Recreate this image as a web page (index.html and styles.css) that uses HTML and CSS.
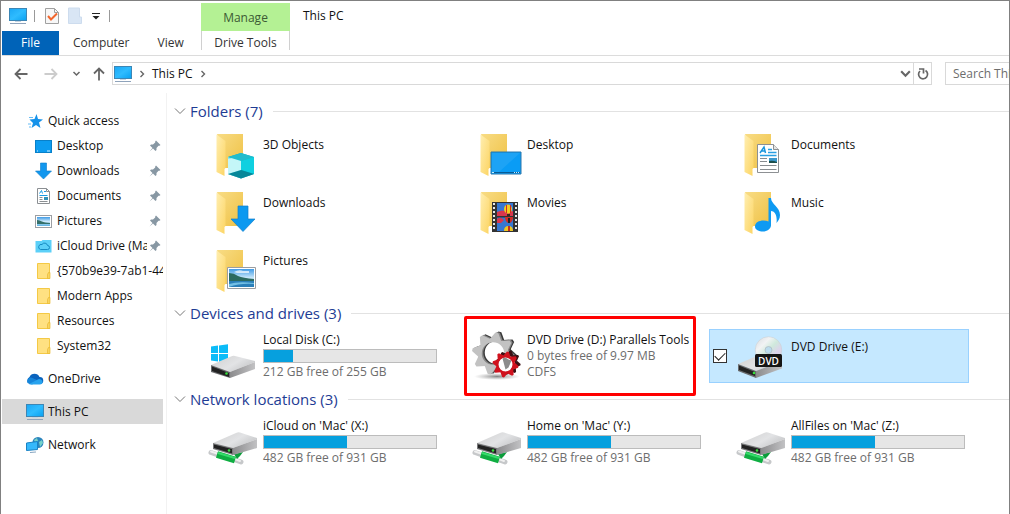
FILE: index.html
```html
<!DOCTYPE html>
<html lang="en">
<head>
    <meta charset="UTF-8">
    <meta name="viewport" content="width=device-width, initial-scale=1.0">
    <title>This PC</title>
    <link rel="stylesheet" href="styles.css">
</head>
<body>
    <!-- shared icons -->
    <svg class="sprite" width="0" height="0" aria-hidden="true">
        <defs>
            <linearGradient id="g-screen" x1="0" y1="0" x2="1" y2="1">
                <stop offset="0" stop-color="#1aa7f5"/><stop offset="0.5" stop-color="#2fbcff"/><stop offset="1" stop-color="#08a0f0"/>
            </linearGradient>
            <linearGradient id="g-back" x1="0" y1="0" x2="1" y2="1">
                <stop offset="0" stop-color="#f8dc85"/><stop offset="1" stop-color="#efc144"/>
            </linearGradient>
            <linearGradient id="g-flap" x1="0" y1="0" x2="1" y2="1">
                <stop offset="0" stop-color="#ffeeb0"/><stop offset="1" stop-color="#fcd462"/>
            </linearGradient>
            <linearGradient id="g-sky" x1="0" y1="0" x2="0" y2="1">
                <stop offset="0" stop-color="#3f9ae5"/><stop offset="0.5" stop-color="#cdeafb"/><stop offset="1" stop-color="#5bb0e0"/>
            </linearGradient>
            <linearGradient id="g-metal" x1="0" y1="0" x2="1" y2="0.6">
                <stop offset="0" stop-color="#cfcfcf"/><stop offset="0.6" stop-color="#e2e3e5"/><stop offset="1" stop-color="#c6c7c9"/>
            </linearGradient>
            <linearGradient id="g-side" x1="0" y1="0" x2="1" y2="0">
                <stop offset="0" stop-color="#8b8b8d"/><stop offset="1" stop-color="#c2c2c4"/>
            </linearGradient>
            <linearGradient id="g-disc" x1="0" y1="0" x2="1" y2="1">
                <stop offset="0" stop-color="#d6dade"/><stop offset="0.3" stop-color="#f2f3f4"/><stop offset="0.5" stop-color="#cfe9dc"/><stop offset="0.7" stop-color="#dcd3ea"/><stop offset="1" stop-color="#d5dade"/>
            </linearGradient>
            <radialGradient id="g-shadow">
                <stop offset="0" stop-color="#666" stop-opacity="0.8"/><stop offset="1" stop-color="#999" stop-opacity="0"/>
            </radialGradient>
            <path id="tooth" d="M-6.500-13l4.500-8h3l5 8z"/>
            <g id="gear">
                <circle r="13" fill="none" stroke="currentColor" stroke-width="3.500"/>
                <g fill="currentColor">
                    <use href="#tooth" transform="rotate(12)"/><use href="#tooth" transform="rotate(57)"/><use href="#tooth" transform="rotate(102)"/><use href="#tooth" transform="rotate(147)"/><use href="#tooth" transform="rotate(192)"/><use href="#tooth" transform="rotate(237)"/><use href="#tooth" transform="rotate(282)"/><use href="#tooth" transform="rotate(327)"/>
                </g>
            </g>
        </defs>

        <symbol id="pc" viewBox="0 0 18 18">
            <rect x="0.5" y="1.5" width="17" height="12" fill="url(#g-screen)" stroke="#3c86b5"/>
            <path d="M6 14h6v1H6z" fill="#c4d4e4"/>
            <path d="M1 16.5h16" stroke="#8fa3bb"/>
        </symbol>
        <symbol id="folder-small" viewBox="0 0 18 18">
            <path d="M2.500 1.500h12v15h-12z" fill="#ffe182" stroke="#f4c945"/>
            <path d="M12.500 16.500v-4l1-2h1.500v6z" fill="#f9d55f" stroke="#e9b932" stroke-width="0.7"/>
        </symbol>
        <symbol id="desktop-small" viewBox="0 0 18 18">
            <rect x="0.5" y="3.500" width="16" height="12" fill="#0c9cf0" stroke="#0980c8"/>
            <path d="M2 14h1m9 0h3" stroke="#d4f0ff"/>
        </symbol>
        <symbol id="arrow-small" viewBox="0 0 18 18">
            <path d="M5.500 1h6v8h5l-8 8-8-8h5z" fill="#1297ee" stroke="#0c7cca" stroke-width="0.6"/>
        </symbol>
        <symbol id="document-small" viewBox="0 0 18 18">
            <path d="M2.500 1.500h9l3 3v12h-12z" fill="#fff" stroke="#8b8f93"/>
            <path d="M11.500 1.500v3h3" fill="none" stroke="#8b8f93"/>
            <path d="M4.500 6.500l2-3 1 3m1.500-2h2M4.500 8.500h8" stroke="#199be5" fill="none"/>
            <path d="M4.500 10.500h3m-3 2h3m-3 2h8" stroke="#8b8f93"/>
            <path d="M9 10h4v3H9z" fill="#3091b8"/>
        </symbol>
        <symbol id="picture-small" viewBox="0 0 18 18">
            <rect x="0.500" y="3.500" width="16" height="12" fill="#fff" stroke="#9c9fa3"/>
            <path d="M2 5h13v9H2z" fill="url(#g-sky)"/>
            <path d="M2 8c4 0 5 3 13 3v1H2z" fill="#34706a"/>
        </symbol>
        <symbol id="icloud-small" viewBox="0 0 18 18">
            <path d="M0.500 4h6l1-1h9v12.500h-16z" fill="#5cd0f8"/>
            <path d="M5.500 12.500h7a2 2 0 0 0 0-4 3 3 0 0 0-5.500-1 2.500 2.500 0 0 0-1.500 5z" fill="none" stroke="#168bc2"/>
        </symbol>
        <symbol id="pin" viewBox="0 0 12 12">
            <path d="M7 0.500L11.500 5l-1 0.800-1 0L7.500 8l0 2-1 1L4 8.500 0.500 11.500 3.500 8 1 5.500l1-1 2 0L6.200 2.500l0-1z" fill="#8797a3"/>
        </symbol>
        <symbol id="chevron-down" viewBox="0 0 12 12">
            <path d="M1 3.500l5 5 5-5" fill="none" stroke="currentColor"/>
        </symbol>
        <symbol id="chevron-bold" viewBox="0 0 12 12">
            <path d="M2 4l4 4 4-4" fill="none" stroke="currentColor" stroke-width="2"/>
        </symbol>
        <symbol id="chevron-right" viewBox="0 0 6 8">
            <path d="M1.500 1l3 3-3 3" fill="none" stroke="currentColor" stroke-width="1.400"/>
        </symbol>
        <symbol id="arrow-line" viewBox="0 0 14 14">
            <path d="M13.500 7H1.500M6.500 2l-5 5 5 5" fill="none" stroke="currentColor" stroke-width="1.800"/>
        </symbol>

        <symbol id="folder" viewBox="0 0 48 48">
            <path d="M4 4h26v34H12z" fill="url(#g-back)"/>
            <path d="M3.500 4.500L12.500 11v27l-1 1v7l-8-4z" fill="url(#g-flap)"/>
        </symbol>
        <symbol id="net-drive" viewBox="0 0 48 48">
            <path d="M-2 34.500l7 2.500M21 41.500l7 2.500" stroke="#c6c8ca" stroke-width="5" stroke-linecap="round"/>
            <path d="M-2 33.500l6 2M22 41l5 2" stroke="#f0f0f0" stroke-width="2" stroke-linecap="round"/>
            <path d="M21 36l9-2-3 4-3 3z" fill="#0a9c3a"/>
            <path d="M4 36.500l18 5.500" stroke="#0fae42" stroke-width="7"/>
            <path d="M5 35l17 5" stroke="#35dc6a" stroke-width="2"/>
            <path d="M0 25l23-10q2-1 4-0.500L44 20v1L20 30z" fill="url(#g-metal)"/>
            <path d="M20 30l24-9v9L20 37z" fill="url(#g-side)"/>
            <path d="M0 25l20 5v7L0 31z" fill="#77787a"/>
            <path d="M1 26.500l18 4.500v4.500L1 30z" fill="#222"/>
            <circle cx="16" cy="32.500" r="1.300" fill="#35e03c"/>
        </symbol>
    </svg>

    <div class="window">
        <header class="ribbon">
            <div class="ribbon-left">
                <div class="toolbar">
                    <svg class="icon"><use href="#pc"/></svg>
                    <span class="divider"></span>
                    <button class="tool" aria-label="Properties">
                        <svg width="14" height="18" viewBox="0 0 14 18"><path d="M0.500 1.500h9l4 4v11h-13z" fill="#f7f7f7" stroke="#a0a0a0"/><path d="M9.500 1.500v4h4" fill="none" stroke="#a0a0a0"/><path d="M3 9l3 3.500 6-6" fill="none" stroke="#f2662d" stroke-width="2"/></svg>
                    </button>
                    <button class="tool" aria-label="New folder">
                        <svg width="14" height="18" viewBox="0 0 14 18"><path d="M0.500 1h11v9h2v6.500h-13z" fill="#d9e6f5" stroke="#cddcee"/></svg>
                    </button>
                    <button class="tool small" aria-label="Customize Quick Access Toolbar">
                        <svg width="8" height="8" viewBox="0 0 8 8"><path d="M0 1.500h8" stroke="#222"/><path d="M0.500 4h7L4 7.500z" fill="#222"/></svg>
                    </button>
                    <span class="divider"></span>
                </div>
                <nav class="tabs">
                    <a class="tab file" href="#">File</a>
                    <a class="tab" href="#">Computer</a>
                    <a class="tab" href="#">View</a>
                </nav>
            </div>
            <div class="context">
                <div class="context-title">Manage</div>
                <a class="context-tab" href="#">Drive Tools</a>
            </div>
            <h1>This PC</h1>
        </header>

        <div class="navbar">
            <div class="nav-buttons">
                <button aria-label="Back"><svg width="14" height="14"><use href="#arrow-line"/></svg></button>
                <button class="disabled forward" aria-label="Forward" disabled><svg width="14" height="14"><use href="#arrow-line"/></svg></button>
                <button class="recent" aria-label="Recent locations"><svg width="9" height="9"><use href="#chevron-bold"/></svg></button>
                <button class="up" aria-label="Up"><svg width="14" height="14"><use href="#arrow-line"/></svg></button>
            </div>
            <div class="address">
                <svg class="icon"><use href="#pc"/></svg>
                <svg width="6" height="8"><use href="#chevron-right"/></svg>
                <a href="#">This PC</a>
                <svg width="6" height="8"><use href="#chevron-right"/></svg>
                <button class="history" aria-label="Previous locations"><svg width="13" height="13"><use href="#chevron-bold"/></svg></button>
                <button class="refresh" aria-label="Refresh">
                    <svg width="12" height="13" viewBox="0 0 12 13"><path d="M8.500 3.500A4.500 4.500 0 1 1 3 4" fill="none" stroke="#666" stroke-width="1.700"/><path d="M2 2h4.500v4.500" fill="none" stroke="#666" stroke-width="1.700"/></svg>
                </button>
            </div>
            <input class="search" type="text" placeholder="Search This PC" aria-label="Search This PC">
        </div>

        <div class="body">
            <nav class="sidebar">
                <a class="row" href="#">
                    <svg class="icon" viewBox="0 0 18 18"><path d="M10.500 2l1.500 5 5 0.500-4 3 1.500 5.500-4.500-3-4.500 3 1.500-5-3.500-3.500 5-0.500z" fill="#1592ea"/><path d="M3 5.500h4M2 12h3M3 15h2" stroke="#64bbf5"/></svg>
                    <span>Quick access</span>
                </a>
                <a class="row sub" href="#"><svg class="icon"><use href="#desktop-small"/></svg><span>Desktop</span><svg class="pin"><use href="#pin"/></svg></a>
                <a class="row sub" href="#"><svg class="icon"><use href="#arrow-small"/></svg><span>Downloads</span><svg class="pin"><use href="#pin"/></svg></a>
                <a class="row sub" href="#"><svg class="icon"><use href="#document-small"/></svg><span>Documents</span><svg class="pin"><use href="#pin"/></svg></a>
                <a class="row sub" href="#"><svg class="icon"><use href="#picture-small"/></svg><span>Pictures</span><svg class="pin"><use href="#pin"/></svg></a>
                <a class="row sub" href="#"><svg class="icon"><use href="#icloud-small"/></svg><span>iCloud Drive (Mac)</span><svg class="pin"><use href="#pin"/></svg></a>
                <a class="row sub" href="#"><svg class="icon"><use href="#folder-small"/></svg><span>{570b9e39-7ab1-445</span></a>
                <a class="row sub" href="#"><svg class="icon"><use href="#folder-small"/></svg><span>Modern Apps</span></a>
                <a class="row sub" href="#"><svg class="icon"><use href="#folder-small"/></svg><span>Resources</span></a>
                <a class="row sub" href="#"><svg class="icon"><use href="#folder-small"/></svg><span>System32</span></a>
                <a class="row root" href="#">
                    <svg class="icon" viewBox="0 0 18 18"><path d="M4 14a3.800 3.800 0 0 1-0.500-7A5.500 5.500 0 0 1 13.500 7a3.500 3.500 0 0 1 0.500 7z" fill="#0a63bd"/><path d="M6 14.500L1.500 13A3.800 3.800 0 0 1 4.500 7.500q2 0 4 1.500l5 2z" fill="#1685da"/><path d="M3 14l8-4q2-1.500 4-0.500a2.600 2.600 0 0 1-1 5H4z" fill="#28a3ee"/></svg>
                    <span>OneDrive</span>
                </a>
                <a class="row root selected" href="#"><svg class="icon"><use href="#pc"/></svg><span>This PC</span></a>
                <a class="row root" href="#">
                    <svg class="icon" viewBox="0 0 18 18"><circle cx="12" cy="6.500" r="5.500" fill="#2a84bd"/><path d="M8 4l3-2 1 3-2 3zM13 6l3-2 1 3-3 4z" fill="#76d2c9"/><path d="M0.500 7l11-1.500v8l-11 1z" fill="#35b8fb" stroke="#1982c4"/><path d="M4 16.500l6-0.500" stroke="#87a5c0"/></svg>
                    <span>Network</span>
                </a>
            </nav>

            <main class="content">
                <section>
                    <h2><svg width="12" height="12"><use href="#chevron-down"/></svg>Folders (7)</h2>
                    <div class="tiles">
                        <div class="tile">
                            <svg class="big" viewBox="0 0 48 48"><use href="#folder"/><path d="M28 23l13 4v17l-13 4.500-13-4.500V27z" fill="#0cb4c8"/><path d="M15 27l13 3.500V48l-13-4z" fill="#8deaf2"/><path d="M17 29l11-5v16l-13 4V29z" fill="#c4f6f8"/><path d="M15 27l13-4 13 4-13 4z" fill="#22bccd"/><path d="M28 31l13-4v17l-13-4z" fill="#0fd0e0"/><path d="M15 44l13-4 13 4-13 4.500z" fill="#078799"/></svg>
                            <p class="name">3D Objects</p>
                        </div>
                        <div class="tile">
                            <svg class="big" viewBox="0 0 48 48"><use href="#folder"/><path d="M14 22h30v22H14z" fill="#0a9cf5" stroke="#2b77ab"/><path d="M15 23h28L22 42h-7z" fill="#fff" opacity="0.080"/><path d="M15 42.500h28" stroke="#075b96"/><path d="M15 42.500h2m20 0h1m1 0h1m1 0h1" stroke="#c8edff"/></svg>
                            <p class="name">Desktop</p>
                        </div>
                        <div class="tile">
                            <svg class="big" viewBox="0 0 48 48"><use href="#folder"/><path d="M16.500 14.500h16l5 5v23h-21z" fill="#fff" stroke="#8d9093"/><path d="M32.500 14.500v5h5" fill="#e5e5e5" stroke="#8d9093"/><path d="M19 23l4-6 1.500 6M20.500 21h4" fill="none" stroke="#1a95dd" stroke-width="1.500"/><path d="M27 19.500h4m-4 3h8.500M19 25.500h16.500" stroke="#2a9fe2" stroke-width="1.500"/><path d="M19 28.500h7m-7 3h7m-7 4h16.500m-16.500 4h16.500" stroke="#888c90"/><path d="M28 28h8v5h-8z" fill="#3c98cc"/><path d="M28 31q4-1 8 1v1h-8z" fill="#1b4f4c"/></svg>
                            <p class="name">Documents</p>
                        </div>
                        <div class="tile">
                            <svg class="big" viewBox="0 0 48 48"><use href="#folder"/><path d="M25 18h10v13h7L30 43.500 18 31h7z" fill="#0c99f0" stroke="#1380cc" stroke-width="0.700"/></svg>
                            <p class="name">Downloads</p>
                        </div>
                        <div class="tile">
                            <svg class="big" viewBox="0 0 48 48"><use href="#folder"/><path d="M15 14h26v30H15z" fill="#333"/><path d="M17 15v28M39 15v28" stroke="#e8e8e8" stroke-width="2" stroke-dasharray="2 2"/><path d="M20 15h16v13H20zM20 29.500h16V43H20z" fill="#3677d2"/><path d="M20 24q6-3 10 0l6-1v5H20zM20 31q3-3 7 1l-3 3h-4z" fill="#d9364e"/><ellipse cx="31" cy="21" rx="4" ry="4.500" fill="#f3cc1e"/><path d="M29 17h1v8h-1zM33 17h1v8h-1z" fill="#d22d1e"/><path d="M28 29h8q0 4-3 6h-2q-3-2-3-6z" fill="#cf2c26"/><path d="M31 30h2v5h-2z" fill="#222"/><path d="M27 43q0-5 4.500-5t4.500 5z" fill="#eec722"/><path d="M31 38h2v5h-2z" fill="#c42c22"/><path d="M30 26h3v2h-3z" fill="#3b271b"/></svg>
                            <p class="name">Movies</p>
                        </div>
                        <div class="tile">
                            <svg class="big" viewBox="0 0 48 48"><use href="#folder"/><path d="M27.500 10h2.500c0 6 9 9 9 17 0 4-2 6-3.500 8 1-8-2-12-5.500-12v14c0 4-4 6.500-8 6.500S14 42 14 38.500c0-4 4-6 8.500-6q3 0 5 1z" fill="#0e9af2"/></svg>
                            <p class="name">Music</p>
                        </div>
                        <div class="tile">
                            <svg class="big" viewBox="0 0 48 48"><use href="#folder"/><path d="M14.500 21.500h28v21h-28z" fill="#fff" stroke="#9a9da0"/><path d="M16 23h25v18H16z" fill="url(#g-sky)"/><path d="M16 27q5 0 9 3 5 2 16 3v2H16z" fill="#2b6a60"/><path d="M16 35h25v6H16z" fill="#2b7fb8"/><path d="M16 38q9-3 25-1v1q-14-1-25 3z" fill="#74c0e5"/><path d="M21 26q5-3 9-1h6v2H24z" fill="#fff" opacity="0.700"/></svg>
                            <p class="name">Pictures</p>
                        </div>
                    </div>
                </section>

                <section>
                    <h2><svg width="12" height="12"><use href="#chevron-down"/></svg>Devices and drives (3)</h2>
                    <div class="tiles">
                        <div class="tile">
                            <svg class="big" viewBox="0 0 48 48">
                                <path d="M-2 14.500l7-1V21h-7zM6 13.400l9-1.200V21H6zM-2 22h7v7.500l-7-1zM6 22h9v9l-9-1.300z" fill="#0cbcf8"/>
                                <path d="M-2 33l20-8.500q2-1 4-0.500L42 29v1L17 40z" fill="url(#g-metal)"/>
                                <path d="M17 40l25-10v7L17 46z" fill="url(#g-side)"/>
                                <path d="M-2 33l19 7v6L-2 40z" fill="#6a6b6d"/>
                                <path d="M-1 34.500L16 41v4L-1 39z" fill="#222"/>
                                <circle cx="13.500" cy="41.500" r="1.300" fill="#35e03c"/>
                            </svg>
                            <div class="info">
                                <p class="name">Local Disk (C:)</p>
                                <progress value="17" max="100" aria-label="Used space on C:"></progress>
                                <p class="space">212 GB free of 255 GB</p>
                            </div>
                        </div>
                        <div class="tile">
                            <svg class="big" viewBox="0 0 48 48">
                                <ellipse cx="20" cy="44.500" rx="23" ry="3.500" fill="url(#g-shadow)"/>
                                <use href="#gear" color="#3a3a3a" transform="translate(19 20.500)"/>
                                <use href="#gear" color="#888" transform="translate(17.500 21)"/>
                                <use href="#gear" color="#c2c2c2" transform="translate(16 21.500)"/>
                                <use href="#gear" color="#3b1014" transform="translate(31.500 30.500) scale(0.580)"/>
                                <g transform="translate(28.500 32.500) scale(0.620)">
                                    <circle r="12" fill="#fff"/>
                                    <use href="#gear" color="#d0121e"/>
                                </g>
                                <path d="M25.500 26.500q3-2 6 1l3 1-3 7-3 2z" fill="#8c8c8c"/>
                            </svg>
                            <div class="info">
                                <p class="name">DVD Drive (D:) Parallels Tools</p>
                                <p class="space">0 bytes free of 9.97 MB</p>
                                <p class="space">CDFS</p>
                            </div>
                            <span class="highlight"></span>
                        </div>
                        <div class="tile picked">
                            <input type="checkbox" checked aria-label="Select DVD Drive (E:)">
                            <svg class="big" viewBox="0 0 48 48">
                                <path d="M-3 32l20-8.500q2-1 4-0.500L41 28v1L15 39z" fill="url(#g-metal)"/>
                                <path d="M15 39l26-10v7.500L15 46z" fill="url(#g-side)"/>
                                <path d="M-3 32l18 7v7l-18-7z" fill="#6a6b6d"/>
                                <path d="M-2 33.500l16 6.500v4L-2 38z" fill="#222"/>
                                <circle cx="13" cy="41" r="1.300" fill="#35e03c"/>
                                <circle cx="27.500" cy="18" r="13.300" fill="url(#g-disc)" stroke="#c9d0d6" stroke-width="0.600"/>
                                <circle cx="27.500" cy="18" r="3.500" fill="#bcdced" stroke="#aeb8c0" stroke-width="0.700"/>
                                <rect x="14" y="22" width="27" height="13" rx="1.500" fill="#151515"/>
                                <text x="27.500" y="32.500" text-anchor="middle" class="disc-label">DVD</text>
                            </svg>
                            <p class="name">DVD Drive (E:)</p>
                        </div>
                    </div>
                </section>

                <section>
                    <h2><svg width="12" height="12"><use href="#chevron-down"/></svg>Network locations (3)</h2>
                    <div class="tiles">
                        <div class="tile">
                            <svg class="big"><use href="#net-drive"/></svg>
                            <div class="info">
                                <p class="name">iCloud on 'Mac' (X:)</p>
                                <progress value="48" max="100" aria-label="Used space on X:"></progress>
                                <p class="space">482 GB free of 931 GB</p>
                            </div>
                        </div>
                        <div class="tile">
                            <svg class="big"><use href="#net-drive"/></svg>
                            <div class="info">
                                <p class="name">Home on 'Mac' (Y:)</p>
                                <progress value="48" max="100" aria-label="Used space on Y:"></progress>
                                <p class="space">482 GB free of 931 GB</p>
                            </div>
                        </div>
                        <div class="tile">
                            <svg class="big"><use href="#net-drive"/></svg>
                            <div class="info">
                                <p class="name">AllFiles on 'Mac' (Z:)</p>
                                <progress value="48" max="100" aria-label="Used space on Z:"></progress>
                                <p class="space">482 GB free of 931 GB</p>
                            </div>
                        </div>
                    </div>
                </section>
            </main>
        </div>
    </div>
</body>
</html>
```
FILE: styles.css
```css
* {
    box-sizing: border-box;
}

body {
    margin: 0;
    font-family: "Segoe UI", "Open Sans", "Noto Sans", sans-serif;
    font-size: 12px;
    line-height: 16px;
    color: #111;
    background-color: #fff;
}

h1, h2, p {
    margin: 0;
    font-weight: normal;
}

a {
    color: inherit;
    text-decoration: none;
}

button {
    display: flex;
    align-items: center;
    justify-content: center;
    padding: 0;
    border: none;
    background: none;
    color: #666;
}

svg {
    flex: none;
}

symbol {
    overflow: visible;
}

.sprite {
    position: absolute;
}

.icon {
    width: 18px;
    height: 18px;
}

.window {
    display: flex;
    flex-direction: column;
    min-height: 100vh;
    padding-left: 1px;
    border: 1px solid #808080;
    border-bottom: none;
}

/* ribbon */
.ribbon {
    display: flex;
    height: 55px;
    border-bottom: 1px solid #dcdcdc;
}

.ribbon-left {
    display: flex;
    flex-direction: column;
    width: 199px;
}

.toolbar {
    display: flex;
    align-items: center;
    height: 30px;
    padding-left: 7px;
    gap: 7px;
}

.divider {
    width: 1px;
    height: 12px;
    background-color: #999;
}

.tool {
    width: 16px;
    height: 18px;
    margin-left: 2px;
}

.tool + .tool {
    margin-left: 0;
}

.tool.small {
    width: 12px;
}

.tabs {
    display: flex;
    height: 24px;
}

.tab {
    padding: 4px 14px;
    color: #333;
}

.tab.file {
    padding: 4px 19px;
    background-color: #0063b8;
    color: #fff;
}

.context {
    width: 89px;
    padding-top: 2px;
    text-align: center;
}

.context-title {
    height: 28px;
    padding-top: 7px;
    background-color: #b4f194;
    color: #3c5a34;
}

.context-tab {
    display: block;
    height: 19px;
    padding-top: 4px;
    border-left: 1px solid #d0d0d0;
    border-right: 1px solid #d0d0d0;
    color: #333;
}

h1 {
    padding: 7px 13px;
    font-size: 12px;
}

/* address bar */
.navbar {
    display: flex;
    height: 37px;
    padding-top: 6px;
}

.nav-buttons {
    display: flex;
    align-items: center;
    width: 110px;
    height: 23px;
    padding-left: 12px;
    gap: 16px;
}

.nav-buttons .disabled {
    color: #ccc;
}

.forward svg {
    transform: rotate(180deg);
}

.up svg {
    transform: rotate(90deg);
}

.recent {
    width: 9px;
    margin-left: -2px;
}

.up {
    margin-left: -5px;
}

.address {
    display: flex;
    flex: 1;
    align-items: center;
    height: 23px;
    padding-left: 1px;
    gap: 7px;
    border: 1px solid #d9d9d9;
    color: #666;
}

.address a {
    color: #111;
}

.history {
    margin-left: auto;
}

.refresh {
    width: 18px;
    height: 21px;
    margin-left: -6px;
    border-left: 1px solid #d9d9d9;
}

.search {
    width: 64px;
    height: 23px;
    margin-left: 13px;
    padding: 0 0 0 7px;
    border: 1px solid #d9d9d9;
    border-right: none;
    font: inherit;
}

.search::placeholder {
    color: #6d6d6d;
}

/* navigation pane */
.body {
    display: flex;
    flex: 1;
}

.sidebar {
    width: 165px;
    padding: 15px 3px 0 0;
    border-right: 1px solid #f2f2f2;
}

.row {
    display: flex;
    align-items: center;
    height: 25px;
    padding-left: 24px;
    gap: 4px;
}

.row.sub {
    padding-left: 33px;
}

.row span {
    flex: 1;
    overflow: hidden;
    white-space: nowrap;
}

.row.root {
    margin-top: 8px;
}

.row.selected {
    background-color: #d9d9d9;
}

.pin {
    width: 12px;
    height: 12px;
    margin: 0 2px 0 -2px;
}

/* file list */
.content {
    flex: 1;
    padding: 2px 0 0 7px;
}

h2 {
    display: flex;
    align-items: center;
    height: 32px;
    gap: 4px;
    font-size: 15px;
    color: #1e3c94;
}

h2 svg {
    color: #777;
}

h2::after {
    content: "";
    flex: 1;
    height: 1px;
    margin-left: 6px;
    background-color: #e2e2e2;
}

.tiles {
    display: grid;
    grid-template-columns: repeat(auto-fill, 260px);
    gap: 4px;
    padding-left: 7px;
}

.tile {
    position: relative;
    display: flex;
    height: 54px;
    padding: 3px 3px 3px 32px;
    gap: 2px;
}

.big {
    width: 48px;
    height: 48px;
    overflow: visible;
}

.tile > .name {
    padding-top: 7px;
}

.info {
    flex: 1;
    white-space: nowrap;
}

.space {
    color: #6d6d6d;
}

progress {
    display: block;
    width: 100%;
    max-width: 174px;
    height: 14px;
    margin: 1px 0;
    border: 1px solid #bcbcbc;
    appearance: none;
    background-color: #e6e6e6;
}

progress::-webkit-progress-bar {
    background-color: #e6e6e6;
}

progress::-webkit-progress-value {
    background-color: #06a0de;
}

.highlight {
    position: absolute;
    top: -13px;
    right: 9px;
    bottom: -13px;
    left: 19px;
    border: 3px solid #f00;
    border-radius: 2px;
}

.tile.picked {
    padding: 2px 2px 2px 3px;
    border: 1px solid #99d1ff;
    background-color: #c5e8ff;
}

.picked input {
    width: 14px;
    height: 14px;
    margin: auto 12px auto 0;
    border: 1px solid #333;
    appearance: none;
    background-color: #fff;
}

.picked input:checked::after {
    content: "";
    display: block;
    width: 9px;
    height: 5px;
    margin: 2px 1px;
    border-bottom: 1px solid #222;
    border-left: 1px solid #222;
    transform: rotate(-45deg);
}

.disc-label {
    font-size: 10px;
    font-weight: 600;
    fill: #fff;
}
```
